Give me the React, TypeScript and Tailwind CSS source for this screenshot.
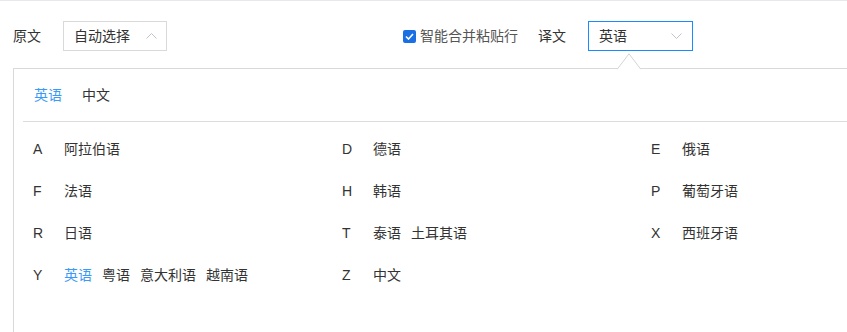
import React from 'react'

const groups: [string, string[]][] = [
  ['A', ['阿拉伯语']],
  ['D', ['德语']],
  ['E', ['俄语']],
  ['F', ['法语']],
  ['H', ['韩语']],
  ['P', ['葡萄牙语']],
  ['R', ['日语']],
  ['T', ['泰语', '土耳其语']],
  ['X', ['西班牙语']],
  ['Y', ['英语', '粤语', '意大利语', '越南语']],
  ['Z', ['中文']],
]

const selected = '英语'

function Chevron({ up }: { up?: boolean }) {
  return (
    <svg width="11" height="6" viewBox="0 0 11 6" fill="none" className="text-[#bfc3c9]">
      <path d={up ? 'M0.5 5.5 L5.5 0.5 L10.5 5.5' : 'M0.5 0.5 L5.5 5.5 L10.5 0.5'} stroke="currentColor" strokeWidth="1" />
    </svg>
  )
}

export default function App() {
  return (
    <div
      className="h-[332px] w-[847px] overflow-hidden border-t border-[#e6e8eb] bg-white text-[14px] text-[#333]"
      style={{ fontFamily: '"Liberation Sans", "Noto Sans CJK SC", sans-serif' }}
    >
      {/* toolbar */}
      <div className="mt-[20px] flex h-[30px] items-center pl-[13px]">
        <span>原文</span>
        <div className="ml-[22px] flex h-[30px] w-[104px] items-center justify-between border border-[#d9d9d9] pl-[10px] pr-[9px]">
          <span>自动选择</span>
          <Chevron up />
        </div>
        <label className="ml-[236px] flex items-center text-[#555]">
          <span className="flex h-[13px] w-[13px] items-center justify-center rounded-[2px] bg-[#1a6fe3]">
            <svg width="9" height="7" viewBox="0 0 9 7" fill="none">
              <path d="M1 3.5 L3.5 6 L8 1" stroke="white" strokeWidth="1.6" />
            </svg>
          </span>
          <span className="ml-[4px]">智能合并粘贴行</span>
        </label>
        <span className="ml-[20px]">译文</span>
        <div className="ml-[22px] flex h-[30px] w-[105px] items-center justify-between border border-[#1a8cff] pl-[10px] pr-[10px]">
          <span>英语</span>
          <Chevron />
        </div>
      </div>

      {/* dropdown panel */}
      <div className="relative ml-[13px] mt-[17px] h-[300px] border-l border-t border-[#d9d9d9]">
        <svg className="absolute left-[603px] top-[-16px]" width="24" height="17" viewBox="0 0 24 17" fill="none">
          <path d="M0 16.5 L12 0.8 L24 16.5" fill="white" stroke="#d4d4d4" strokeWidth="1" />
          <rect x="0.5" y="16" width="23" height="2" fill="white" />
        </svg>

        <div className="ml-[9px] flex h-[53px] items-center gap-[20px] border-b border-[#dcdcdc] pl-[11px]">
          <span className="text-[#3a9af7]">英语</span>
          <span>中文</span>
        </div>

        <div className="grid grid-cols-[309px_309px_309px] pl-[19px] pt-[6px]">
          {groups.map(([letter, names]) => (
            <div key={letter} className="flex h-[42px] items-center">
              <span className="w-[31px]">{letter}</span>
              <div className="flex gap-[10px]">
                {names.map((n) => (
                  <span key={n} className={n === selected ? 'text-[#3a9af7]' : ''}>
                    {n}
                  </span>
                ))}
              </div>
            </div>
          ))}
        </div>
      </div>
    </div>
  )
}
